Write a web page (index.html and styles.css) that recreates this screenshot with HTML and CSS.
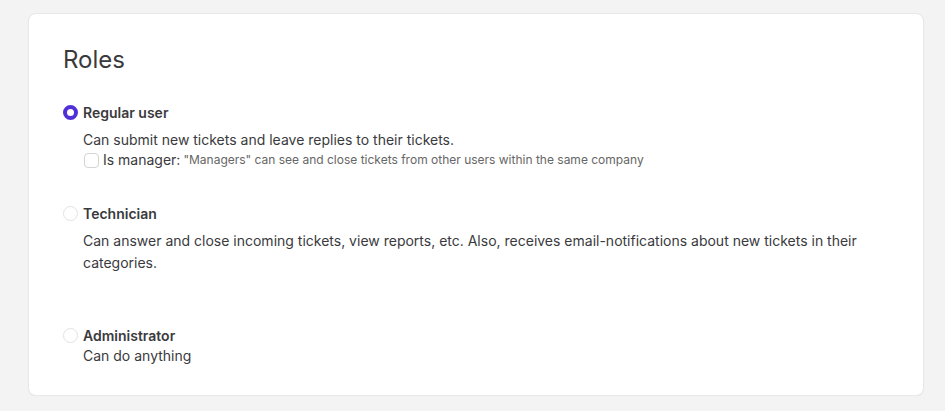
FILE: index.html
```html
<!DOCTYPE html>
<html lang="en">
<head>
    <meta charset="UTF-8">
    <title>Roles</title>
    <link rel="stylesheet" href="styles.css">
</head>
<body>
<div class="card">
    <h2>Roles</h2>

    <div class="role role-first">
        <span class="radio checked"></span>
        <div class="role-body">
            <div class="role-name">Regular user</div>
            <p class="role-desc">Can submit new tickets and leave replies to their tickets.</p>
            <label class="manager">
                <span class="checkbox"></span>
                <span>Is manager:</span>
                <span class="hint">"Managers" can see and close tickets from other users within the same company</span>
            </label>
        </div>
    </div>

    <div class="role role-tech">
        <span class="radio"></span>
        <div class="role-body">
            <div class="role-name">Technician</div>
            <p class="role-desc role-desc-wide">Can answer and close incoming tickets, view reports, etc. Also, receives email-notifications about new tickets in their categories.</p>
        </div>
    </div>

    <div class="role role-admin">
        <span class="radio"></span>
        <div class="role-body">
            <div class="role-name">Administrator</div>
            <p class="role-desc role-desc-tight">Can do anything</p>
        </div>
    </div>
</div>
</body>
</html>
```

FILE: styles.css
```css
body {
    margin: 0;
    background: #f3f3f3;
    font-family: Inter, 'Noto Sans', sans-serif;
    color: #3a3a3d;
}

.card {
    margin: 13px 21px 0 28px;
    height: 383px;
    box-sizing: border-box;
    padding: 31px 34px;
    background: #fff;
    border: 1px solid #e8e8e8;
    border-radius: 8px;
    box-shadow: 0 1px 2px rgba(0, 0, 0, 0.04);
}

h2 {
    margin: 0;
    font-size: 24px;
    font-weight: 400;
    line-height: 29px;
}

.role {
    display: flex;
    gap: 5px;
    font-size: 14px;
    line-height: 20px;
}

.role-first {
    margin-top: 29px;
}

.role-tech {
    margin-top: 34px;
}

.role-admin {
    margin-top: 52px;
}

.radio {
    flex: none;
    width: 15px;
    height: 15px;
    margin-top: 2px;
    box-sizing: border-box;
    border: 1px solid #e2e2e2;
    border-radius: 50%;
    background: #fff;
}

.radio.checked {
    border: 4.5px solid #5230d8;
}

.role-name {
    font-weight: 600;
}

.role-desc {
    margin: 7px 0 0;
}

.role-desc-wide {
    margin-top: 6px;
    line-height: 22px;
}

.role-desc-tight {
    margin-top: 0;
}

.manager {
    display: flex;
    align-items: center;
    gap: 3px;
}

.checkbox {
    width: 15px;
    height: 15px;
    box-sizing: border-box;
    border: 1px solid #d4d4d4;
    border-radius: 4px;
    margin: 0 1px 0 1px;
}

.hint {
    font-size: 12px;
    color: #666;
}
```
